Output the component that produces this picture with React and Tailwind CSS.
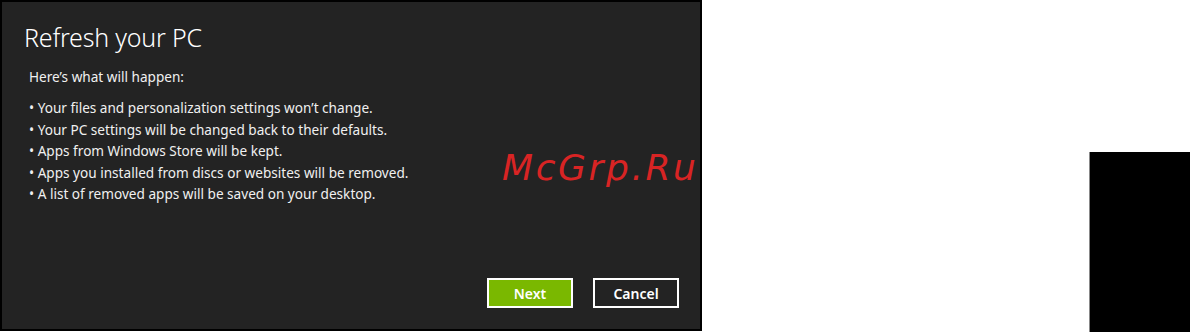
import React from "react";

const items = [
  "Your files and personalization settings won\u2019t change.",
  "Your PC settings will be changed back to their defaults.",
  "Apps from Windows Store will be kept.",
  "Apps you installed from discs or websites will be removed.",
  "A list of removed apps will be saved on your desktop.",
];

export default function App() {
  return (
    <div className="flex h-[332px] w-[1190px] items-start bg-white">
      {/* dialog panel */}
      <div className="relative flex h-[331px] w-[702px] shrink-0 flex-col border-2 border-black bg-[#232323] pl-[22px] pr-[21px] font-['Noto_Sans',sans-serif] text-white">
        <h1 className="mt-[17px] text-[25px] font-light leading-[36px] tracking-[-0.2px]">
          Refresh your PC
        </h1>
        <p className="ml-[5px] mt-[12px] text-[13.6px] leading-[20px] text-[#f0f0f0]">
          Here&rsquo;s what will happen:
        </p>
        <ul className="ml-[5px] mt-[10px] flex flex-col text-[13.6px] leading-[21.6px] text-[#f0f0f0]">
          {items.map((t) => (
            <li key={t}>&bull; {t}</li>
          ))}
        </ul>
        <div className="mt-auto mb-[21px] flex justify-end gap-[20px]">
          <button className="h-[30px] w-[86px] border-2 border-white bg-[#7ab800] text-[14px] font-semibold text-white">
            Next
          </button>
          <button className="h-[30px] w-[86px] border-2 border-white bg-[#232323] text-[14px] font-semibold text-white">
            Cancel
          </button>
        </div>
        <span className="absolute left-[500px] top-[144px] font-['DejaVu_Sans',sans-serif] text-[36px] italic leading-[44px] tracking-[2.6px] text-[#d82424]">
          McGrp.Ru
        </span>
      </div>
      <div className="flex-1" />
      <div className="mt-[152px] h-[180px] w-[101px] shrink-0 border-l border-[#888] bg-black" />
    </div>
  );
}
